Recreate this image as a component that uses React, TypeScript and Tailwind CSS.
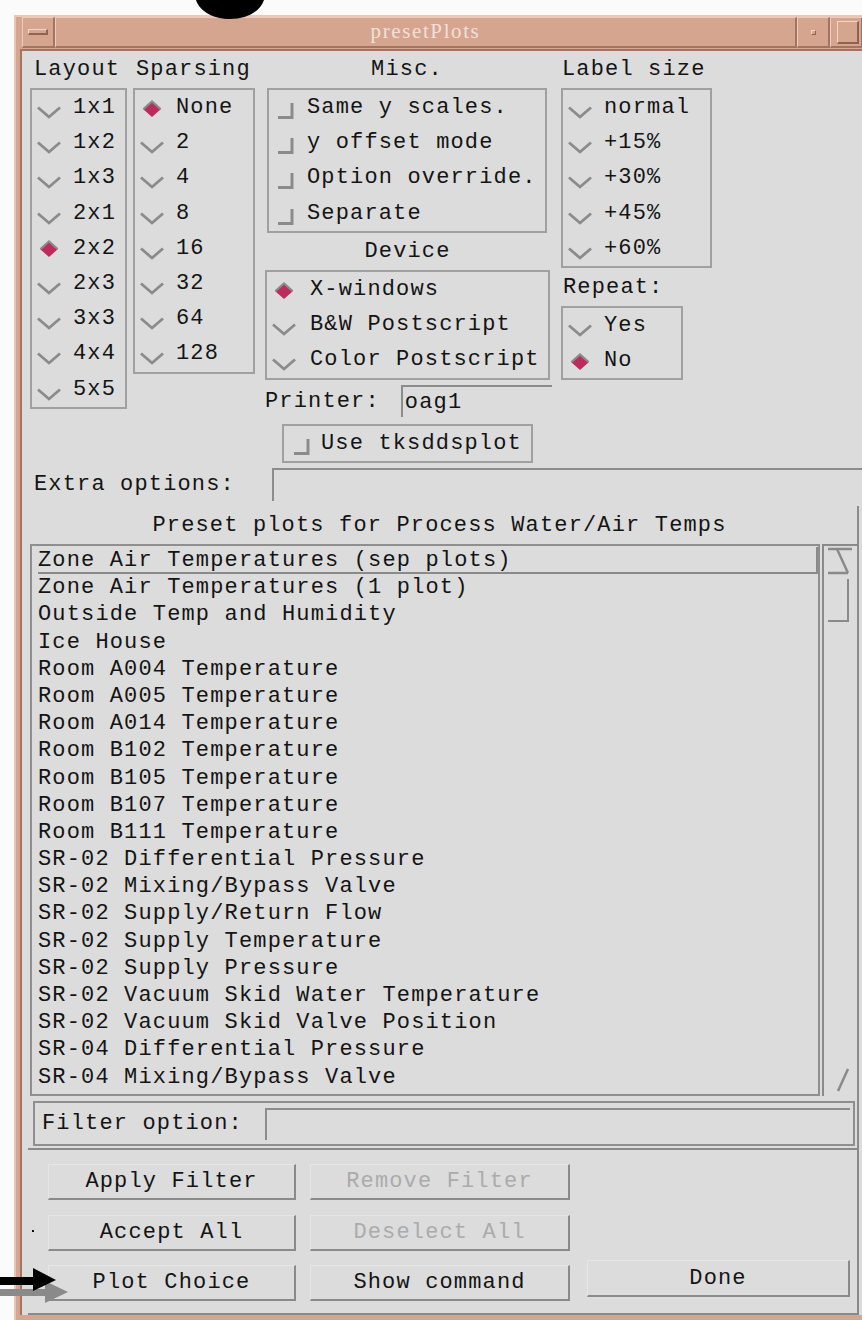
import React from "react";

const LAYOUTS = ["1x1", "1x2", "1x3", "2x1", "2x2", "2x3", "3x3", "4x4", "5x5"];
const SPARSING = ["None", "2", "4", "8", "16", "32", "64", "128"];
const MISC = ["Same y scales.", "y offset mode", "Option override.", "Separate"];
const DEVICES = ["X-windows", "B&W Postscript", "Color Postscript"];
const LABEL_SIZES = ["normal", "+15%", "+30%", "+45%", "+60%"];

const PRESETS = [
  "Zone Air Temperatures (sep plots)",
  "Zone Air Temperatures (1 plot)",
  "Outside Temp and Humidity",
  "Ice House",
  "Room A004 Temperature",
  "Room A005 Temperature",
  "Room A014 Temperature",
  "Room B102 Temperature",
  "Room B105 Temperature",
  "Room B107 Temperature",
  "Room B111 Temperature",
  "SR-02 Differential Pressure",
  "SR-02 Mixing/Bypass Valve",
  "SR-02 Supply/Return Flow",
  "SR-02 Supply Temperature",
  "SR-02 Supply Pressure",
  "SR-02 Vacuum Skid Water Temperature",
  "SR-02 Vacuum Skid Valve Position",
  "SR-04 Differential Pressure",
  "SR-04 Mixing/Bypass Valve",
];

function Chevron() {
  return (
    <svg width="24" height="13" viewBox="0 0 24 13" className="shrink-0 mt-[10px]">
      <path d="M1 1.5 L12 11 L23 1.5" fill="none" stroke="#8b8b8b" strokeWidth="2.8" />
    </svg>
  );
}

function Diamond() {
  return (
    <svg width="24" height="18" viewBox="0 0 24 18" className="shrink-0 mt-[2px]">
      <polygon points="12,1 21,9 12,17 3,9" fill="#bd2b5c" />
      <polyline points="3.5,9 12,1.5 20.5,9" fill="none" stroke="#8a8a8a" strokeWidth="2.2" />
    </svg>
  );
}

function CheckMark() {
  return (
    <svg width="17" height="17" viewBox="0 0 17 17" className="shrink-0 mt-[6px]">
      <path d="M15 1 V15.5 H1" fill="none" stroke="#8b8b8b" strokeWidth="3" />
    </svg>
  );
}

function Radio({ label, on = false, slot = "w-[36px]" }: { label: string; on?: boolean; slot?: string }) {
  return (
    <div className="h-[35.2px] flex items-center">
      <div className={`${slot} shrink-0 flex`}>{on ? <Diamond /> : <Chevron />}</div>
      <span className="whitespace-pre">{label}</span>
    </div>
  );
}

function Check({ label }: { label: string }) {
  return (
    <div className="h-[35.2px] flex items-center">
      <div className="w-[30px] shrink-0 flex">
        <CheckMark />
      </div>
      <span className="whitespace-pre">{label}</span>
    </div>
  );
}

function Label({ text, className = "" }: { text: string; className?: string }) {
  return <div className={`flex items-center whitespace-pre ${className}`}>{text}</div>;
}

function Button({ text, disabled = false, className = "" }: { text: string; disabled?: boolean; className?: string }) {
  return (
    <div
      className={`flex items-center justify-center whitespace-pre border-t border-l border-r-2 border-b-2 border-t-[#e6e6e6] border-l-[#e6e6e6] border-r-[#8a8a8a] border-b-[#8a8a8a] ${
        disabled ? "text-[#ababab]" : ""
      } ${className}`}
    >
      {text}
    </div>
  );
}

const raised = "border-t border-l border-b-2 border-r-2 border-t-[#eecbbb] border-l-[#eecbbb] border-b-[#a27563] border-r-[#a27563]";

function TitleBar() {
  return (
    <div className="flex h-[31px] ml-[6px]">
      <div className={`w-[33px] shrink-0 flex items-center justify-center ${raised}`}>
        <div className="w-[20px] h-[6px] border-t border-l border-b-2 border-r-2 border-t-[#f2d6c9] border-l-[#f2d6c9] border-b-[#8e6352] border-r-[#8e6352]" />
      </div>
      <div
        className={`w-[742px] shrink-0 flex items-center justify-center font-['Liberation_Serif',serif] text-[21px] tracking-[1.6px] text-[#f1e0d8] ${raised}`}
      >
        presetPlots
      </div>
      <div className={`w-[33px] shrink-0 flex items-center justify-center ${raised}`}>
        <div className="w-[5px] h-[5px] border-t border-l border-b border-r border-t-[#f2d6c9] border-l-[#f2d6c9] border-b-[#8e6352] border-r-[#8e6352]" />
      </div>
      <div className={`w-[33px] shrink-0 flex items-center pl-[6px] ${raised}`}>
        <div className="w-[22px] h-[23px] border-t border-l border-b-2 border-r-2 border-t-[#f2d6c9] border-l-[#f2d6c9] border-b-[#8e6352] border-r-[#8e6352]" />
      </div>
    </div>
  );
}

function ScrollBar() {
  return (
    <div className="flex-1 ml-[2px] border-l-2 border-t-2 border-[#8a8a8a] flex flex-col">
      <svg width="33" height="30" viewBox="0 0 33 30" className="shrink-0">
        <g fill="none" stroke="#8a8a8a" strokeWidth="2.5">
          <path d="M4 3 H28" />
          <path d="M13 3 L24 27" />
          <path d="M4 27 H24" />
        </g>
      </svg>
      <div className="ml-[4px] mt-[3px] w-[21px] h-[43px] border-r-2 border-b-2 border-[#8a8a8a]" />
      <div className="flex-1" />
      <svg width="33" height="30" viewBox="0 0 33 30" className="shrink-0">
        <path d="M24 3 L14 25" fill="none" stroke="#8a8a8a" strokeWidth="2.5" />
      </svg>
    </div>
  );
}

export default function App() {
  return (
    <div className="relative w-[862px] h-[1320px] overflow-hidden bg-[#fbfbfb] font-['Liberation_Mono',monospace] text-[22px] tracking-[1.15px] text-[#141414]">
      {/* tail of a large black glyph sitting above the window */}
      <svg className="absolute left-[196px] top-0" width="68" height="20" viewBox="0 0 68 20">
        <path d="M0 0 H68 C64 12 50 19 34 19 C18 19 4 12 0 0 Z" fill="#000" />
      </svg>

      <div className="pt-[15px] pl-[14px]">
        <div className="w-[848px] bg-[#d5a590] border-l-2 border-t-2 border-[#ecc7b6] pb-[10px]">
          <TitleBar />

          <div className="ml-[4px] mt-[1px] border-l-2 border-t-2 border-[#a27563] bg-[#dcdcdc] flex flex-col">
            {/* option columns */}
            <div className="flex items-start pl-[8px]">
              <div className="w-[97px] shrink-0">
                <Label text="Layout" className="h-[37px] pl-[4px]" />
                <div className="h-[321px] border-2 border-[#a0a0a0] pl-[5px]">
                  {LAYOUTS.map((l) => (
                    <Radio key={l} label={l} on={l === "2x2"} />
                  ))}
                </div>
              </div>

              <div className="w-[122px] ml-[6px] shrink-0">
                <Label text="Sparsing" className="h-[37px] pl-[3px]" />
                <div className="h-[286px] border-2 border-[#a0a0a0] pl-[5px]">
                  {SPARSING.map((s) => (
                    <Radio key={s} label={s} on={s === "None"} />
                  ))}
                </div>
              </div>

              <div className="w-[287px] ml-[10px] shrink-0">
                <Label text="Misc." className="h-[37px] w-[280px] ml-[2px] justify-center" />
                <div className="w-[280px] ml-[2px] h-[145px] border-2 border-[#a0a0a0] pl-[8px]">
                  {MISC.map((m) => (
                    <Check key={m} label={m} />
                  ))}
                </div>
                <Label text="Device" className="h-[37px] w-[285px] justify-center" />
                <div className="w-[285px] h-[110px] border-2 border-[#a0a0a0] pl-[5px]">
                  {DEVICES.map((d) => (
                    <Radio key={d} label={d} on={d === "X-windows"} slot="w-[38px]" />
                  ))}
                </div>
                <div className="mt-[5px] h-[32px] flex items-center">
                  <span>Printer:</span>
                  <div className="ml-[21px] w-[152px] h-[32px] border-t-2 border-l-2 border-[#8c8c8c] pl-[2px] flex items-center">
                    oag1
                  </div>
                </div>
                <div className="mt-[7px] ml-[17px] w-[251px] h-[39px] border-2 border-[#a0a0a0] pl-[9px] flex items-center">
                  <div className="w-[28px] shrink-0 flex">
                    <CheckMark />
                  </div>
                  <span className="whitespace-pre">Use tksddsplot</span>
                </div>
              </div>

              <div className="w-[151px] ml-[9px] shrink-0">
                <Label text="Label size" className="h-[37px] pl-[1px]" />
                <div className="h-[180px] border-2 border-[#a0a0a0] pl-[5px]">
                  {LABEL_SIZES.map((s) => (
                    <Radio key={s} label={s} />
                  ))}
                </div>
                <Label text="Repeat:" className="h-[38px] pl-[2px]" />
                <div className="w-[122px] h-[74px] border-2 border-[#a0a0a0] pl-[5px]">
                  <Radio label="Yes" />
                  <Radio label="No" on />
                </div>
              </div>
            </div>

            {/* extra options */}
            <div className="mt-[5px] h-[33px] flex">
              <Label text="Extra options:" className="w-[250px] pl-[12px] shrink-0" />
              <div className="flex-1 border-t-2 border-l-2 border-[#8c8c8c]" />
            </div>

            {/* preset list */}
            <div className="mt-[5px] mr-[3px] border-r-2 border-[#8c8c8c] pb-[2px]">
              <Label text="Preset plots for Process Water/Air Temps" className="h-[38px] justify-center" />
              <div className="flex h-[552px] ml-[8px]">
                <div className="w-[790px] shrink-0 border-2 border-[#8f8f8f] pt-[1px] pl-[6px]">
                  {PRESETS.map((p, i) => (
                    <div
                      key={p}
                      className={`h-[27.2px] leading-[27.2px] whitespace-pre ${
                        i === 0 ? "border-b-2 border-r-2 border-[#8a8a8a]" : ""
                      }`}
                    >
                      {p}
                    </div>
                  ))}
                </div>
                <ScrollBar />
              </div>
              <div className="mt-[5px] ml-[11px] mr-[2px] h-[45px] border-2 border-[#8f8f8f] flex items-center">
                <Label text="Filter option:" className="w-[230px] pl-[7px] shrink-0" />
                <div className="flex-1 mr-[3px] h-[32px] border-t-2 border-l-2 border-[#8c8c8c]" />
              </div>
            </div>

            {/* action buttons */}
            <div className="ml-[6px] mr-[3px] h-[167px] border-t-2 border-r-2 border-b-2 border-[#8a8a8a] flex pl-[20px]">
              <div className="w-[248px] shrink-0 pt-[14px] flex flex-col gap-[14.5px]">
                <Button text="Apply Filter" className="h-[36px]" />
                <Button text="Accept All" className="h-[36px]" />
                <Button text="Plot Choice" className="h-[36px]" />
              </div>
              <div className="w-[260px] ml-[14px] shrink-0 pt-[14px] flex flex-col gap-[14.5px]">
                <Button text="Remove Filter" disabled className="h-[36px]" />
                <Button text="Deselect All" disabled className="h-[36px]" />
                <Button text="Show command" className="h-[36px]" />
              </div>
              <div className="w-[263px] ml-[17px] shrink-0 flex flex-col justify-end pb-[16px]">
                <Button text="Done" className="h-[37px]" />
              </div>
            </div>
          </div>
        </div>
      </div>

      {/* pointer arrows at the Plot Choice button */}
      <svg className="absolute left-0 top-[1264px]" width="72" height="42" viewBox="0 0 72 42">
        <rect x="0" y="25" width="48" height="7" fill="#8a8a8a" />
        <polygon points="45,17 68,28 45,39" fill="#8a8a8a" />
        <rect x="0" y="13" width="37" height="8" fill="#000" />
        <polygon points="33,4 56,16 33,27" fill="#000" />
      </svg>
      <div className="absolute left-[32px] top-[1230px] w-[2px] h-[2px] bg-black" />
    </div>
  );
}
